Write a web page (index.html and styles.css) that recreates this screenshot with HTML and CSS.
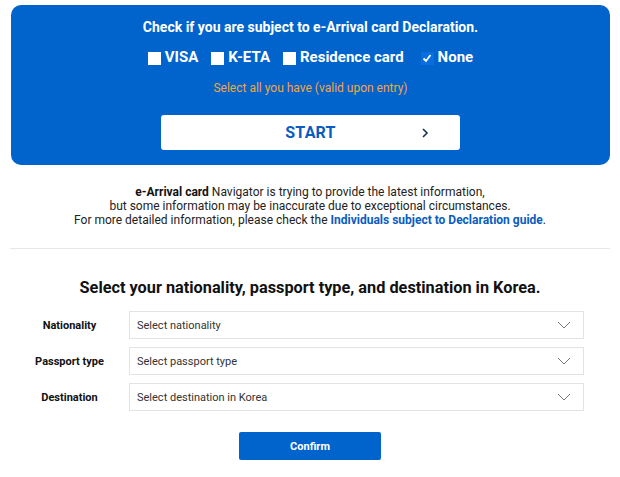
FILE: index.html
```html
<!DOCTYPE html>
<html lang="en">
<head>
<meta charset="utf-8">
<title>e-Arrival card Navigator</title>
<link rel="stylesheet" href="styles.css">
</head>
<body>
<section class="hero">
  <h2 class="hero-title">Check if you are subject to e-Arrival card Declaration.</h2>
  <div class="checks">
    <label class="check"><span class="box"></span>VISA</label>
    <label class="check"><span class="box"></span>K-ETA</label>
    <label class="check"><span class="box"></span>Residence card</label>
    <label class="check"><span class="box on"><svg viewBox="0 0 12 12" width="12" height="12"><path d="M2.5 6.5 L5 9 L9.5 3" fill="none" stroke="#fff" stroke-width="1.8"/></svg></span>None</label>
  </div>
  <p class="hint">Select all you have (valid upon entry)</p>
  <button class="start"><span class="start-text">START</span><svg class="chev" viewBox="0 0 8 12" width="8" height="12"><path d="M2 2 L6 6 L2 10" fill="none" stroke="#1a2f5a" stroke-width="1.6"/></svg></button>
</section>

<p class="info">
  <b>e-Arrival card</b> Navigator is trying to provide the latest information,<br>
  but some information may be inaccurate due to exceptional circumstances.<br>
  For more detailed information, please check the <a class="guide">Individuals subject to Declaration guide</a>.
</p>

<hr class="divider">

<h3 class="sel-title">Select your nationality, passport type, and destination in Korea.</h3>

<div class="form">
  <div class="row">
    <span class="lbl">Nationality</span>
    <div class="select"><span>Select nationality</span><svg class="down" viewBox="0 0 14 8" width="14" height="8"><path d="M1 1 L7 7 L13 1" fill="none" stroke="#777" stroke-width="1"/></svg></div>
  </div>
  <div class="row">
    <span class="lbl">Passport type</span>
    <div class="select"><span>Select passport type</span><svg class="down" viewBox="0 0 14 8" width="14" height="8"><path d="M1 1 L7 7 L13 1" fill="none" stroke="#777" stroke-width="1"/></svg></div>
  </div>
  <div class="row">
    <span class="lbl">Destination</span>
    <div class="select"><span>Select destination in Korea</span><svg class="down" viewBox="0 0 14 8" width="14" height="8"><path d="M1 1 L7 7 L13 1" fill="none" stroke="#777" stroke-width="1"/></svg></div>
  </div>
</div>

<div class="actions"><button class="confirm">Confirm</button></div>
</body>
</html>
```

FILE: styles.css
```css
* { box-sizing: border-box; }
html, body { margin: 0; padding: 0; background: #fff; }
body {
  width: 620px;
  font-family: Roboto, "Liberation Sans", Arial, sans-serif;
  color: #111;
}
.hero {
  margin: 5px 10px 0 11px;
  height: 160px;
  background: #0064cc;
  border-radius: 10px;
  display: flex;
  flex-direction: column;
  align-items: center;
  padding-top: 14px;
}
.hero-title {
  margin: 0;
  font-size: 14px;
  line-height: 17px;
  font-weight: 700;
  color: #fff;
}
.checks {
  margin-top: 12px;
  display: flex;
  gap: 13px;
}
.check {
  display: flex;
  align-items: center;
  font-size: 15px;
  line-height: 18px;
  font-weight: 700;
  color: #fff;
}
.check:last-child { margin-left: 4px; }
.box {
  width: 13px;
  height: 13px;
  background: #fff;
  margin-right: 4px;
  margin-top: 2px;
  display: flex;
  align-items: center;
  justify-content: center;
}
.box.on { background: #0a6ee0; }
.hint {
  margin: 15px 0 0;
  font-size: 12px;
  line-height: 14px;
  color: #f2a640;
}
.start {
  margin-top: 20px;
  width: 299px;
  height: 35px;
  border: 0;
  border-radius: 3px;
  background: #fff;
  position: relative;
  display: flex;
  align-items: center;
  justify-content: center;
  font-family: inherit;
  padding: 0;
}
.start-text {
  font-size: 16px;
  font-weight: 700;
  color: #0a5cc0;
  letter-spacing: 0.2px;
}
.chev {
  position: absolute;
  left: 260px;
  top: 12px;
}
.info {
  margin: 20px 0 0;
  text-align: center;
  font-size: 12px;
  line-height: 14px;
  color: #222;
}
.info b { color: #111; }
.guide { color: #0a5cc0; font-weight: 700; }
.divider {
  margin: 21px 10px 0;
  border: 0;
  border-top: 1px solid #e6e6e6;
}
.sel-title {
  margin: 29px 0 0;
  text-align: center;
  font-size: 16.3px;
  line-height: 20px;
  font-weight: 700;
  color: #111;
}
.form {
  margin-top: 13px;
  display: flex;
  flex-direction: column;
  gap: 8px;
  padding: 0 36px 0 10px;
}
.row {
  display: flex;
  align-items: center;
}
.lbl {
  width: 119px;
  text-align: center;
  font-size: 11px;
  font-weight: 700;
  color: #111;
}
.select {
  flex: 1;
  height: 28px;
  border: 1px solid #e3e3e3;
  display: flex;
  align-items: center;
  justify-content: space-between;
  padding: 0 10px 0 7px;
  font-size: 11px;
  color: #333;
}
.down { margin-right: 2px; }
.actions {
  margin-top: 21px;
  padding-left: 239px;
}
.confirm {
  width: 142px;
  height: 28px;
  border: 0;
  border-radius: 2px;
  background: #0064cc;
  color: #fff;
  font-family: inherit;
  font-size: 11px;
  font-weight: 700;
}
```
